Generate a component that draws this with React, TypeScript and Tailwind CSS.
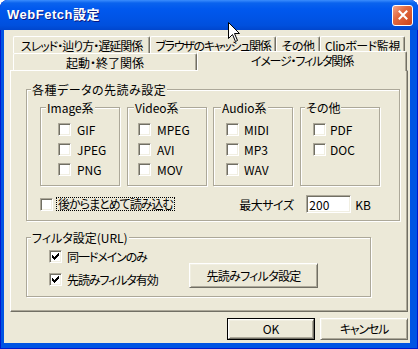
import type { ReactNode } from "react";

const sunken =
  "bg-white border border-t-[#ACA899] border-l-[#ACA899] border-r-white border-b-white shadow-[inset_1px_1px_0_#716F64,inset_-1px_-1px_0_#F1EFE2]";

function Check({ on }: { on?: boolean }) {
  return (
    <span className={"w-[13px] h-[13px] shrink-0 flex items-center justify-center " + sunken}>
      {on && (
        <svg width="7" height="7" viewBox="0 0 7 7" shapeRendering="crispEdges">
          <path
            d="M6 0h1v1h-1zM5 1h2v1h-2zM0 2h1v1h-1zM4 2h3v1h-3zM0 3h2v1h-2zM3 3h3v1h-3zM0 4h5v1h-5zM1 5h3v1h-3zM2 6h1v1h-1z"
            fill="#000"
          />
        </svg>
      )}
    </span>
  );
}

function Item({
  label,
  on,
  gap = "gap-[5px]",
  tx = "",
}: {
  label: string;
  on?: boolean;
  gap?: string;
  tx?: string;
}) {
  return (
    <div className={"flex items-center h-[13px] whitespace-nowrap " + gap}>
      <Check on={on} />
      <span className={"leading-[13px] " + tx}>{label}</span>
    </div>
  );
}

function Group({
  title,
  className,
  lx = "ml-[5px]",
  children,
}: {
  title: string;
  className: string;
  lx?: string;
  children: ReactNode;
}) {
  return (
    <fieldset
      className={
        "shrink-0 border border-[#ACA899] shadow-[inset_1px_1px_0_#fff,1px_1px_0_#fff] " + className
      }
    >
      <legend className={"px-[1px] leading-[13px] bg-[#ECE9D8] whitespace-nowrap " + lx}>{title}</legend>
      {children}
    </fieldset>
  );
}

function Tab({ className, children }: { className: string; children: ReactNode }) {
  return (
    <div
      className={
        "flex items-center justify-center h-full shrink-0 whitespace-nowrap leading-[13px] bg-[#ECE9D8] border-t border-l border-r border-t-white border-l-white border-r-[#716F64] rounded-t-[2px] shadow-[inset_-1px_0_0_#ACA899] " +
        className
      }
    >
      {children}
    </div>
  );
}

const raised =
  "border border-t-white border-l-white border-r-[#716F64] border-b-[#716F64] shadow-[inset_1px_1px_0_#F1EFE2,inset_-1px_-1px_0_#ACA899] bg-[#ECE9D8]";

function Btn({ children, def, className }: { children: ReactNode; def?: boolean; className: string }) {
  if (def) {
    return (
      <div className={"flex border border-black " + className}>
        <div className={"flex-1 flex items-center justify-center " + raised}>{children}</div>
      </div>
    );
  }
  return <div className={"flex items-center justify-center " + raised + " " + className}>{children}</div>;
}

export default function App() {
  return (
    <div className="relative w-[418px] h-[349px] bg-white text-[12px] text-black font-['Noto_Sans_CJK_JP',sans-serif] [font-feature-settings:'palt'] select-none">
      <div className="flex flex-col w-full h-full rounded-t-[8px] overflow-hidden bg-[#0054E3] shadow-[inset_1px_0_0_#0019CF,inset_-1px_0_0_#0019CF,inset_0_-1px_0_#0019CF]">
        {/* title bar */}
        <div className="h-[30px] shrink-0 flex items-center justify-between pl-[7px] pr-[5px] bg-[linear-gradient(to_bottom,#3b8dfd_0%,#0a63ee_10%,#0058ee_30%,#0054e6_60%,#0050dd_85%,#0046cd_100%)]">
          <span className="text-white font-bold text-[13px] tracking-[0.5px] font-['Liberation_Sans','Noto_Sans_CJK_JP',sans-serif] [text-shadow:1px_1px_0_#0A1883]">
            WebFetch設定
          </span>
          <div className="w-[21px] h-[21px] rounded-[3px] border border-white flex items-center justify-center bg-[linear-gradient(135deg,#F2A58C_0%,#E2693F_40%,#C9431B_100%)]">
            <svg width="10" height="10" viewBox="0 0 10 10">
              <path d="M1.5 1.5l7 7M8.5 1.5l-7 7" stroke="#fff" strokeWidth="2" strokeLinecap="square" />
            </svg>
          </div>
        </div>

        <div className="flex-1 flex pl-[4px] pr-[8px] pb-[6px]">
          <div className="flex-1 flex flex-col bg-[#ECE9D8] pl-[6px] pr-[2px] pt-[6px] pb-[3px]">
            {/* tabs */}
            <div className="flex ml-[3px] h-[17px]">
              <Tab className="w-[137px] tracking-[-1px]">スレッド・辿り方・遅延関係</Tab>
              <Tab className="w-[126px] tracking-[-1.3px]">ブラウザのキャッシュ関係</Tab>
              <Tab className="w-[44px] tracking-[-0.5px]">その他</Tab>
              <Tab className="w-[85px] tracking-[-0.4px]">Clipボード監視</Tab>
            </div>
            <div className="flex items-end ml-[3px] h-[17px]">
              <Tab className="w-[184px]">起動・終了関係</Tab>
              <div className="relative z-10 w-[210px] h-[20px] -mb-px shrink-0 flex items-center justify-center pb-[2px] whitespace-nowrap leading-[13px] tracking-[-1.2px] bg-[#ECE9D8] border-t border-l border-r border-t-white border-l-white border-r-[#716F64] rounded-t-[2px] shadow-[inset_-1px_0_0_#ACA899]">
                イメージ・フィルタ関係
              </div>
            </div>

            {/* tab page */}
            <div className="h-[242px] shrink-0 flex flex-col border border-t-white border-l-white border-r-[#716F64] border-b-[#716F64] shadow-[inset_-1px_-1px_0_#ACA899] pl-[15px] pt-[12px]">
              <Group title="各種データの先読み設定" className="w-[374px] h-[138px]" lx="ml-[4px] tracking-[0.5px]">
                <div className="flex pl-[13px] mt-[5px]">
                  <Group title="Image系" className="w-[80px] h-[85px]" lx="ml-[5px]">
                    <div className="flex flex-col gap-[7px] pl-[17px] pt-[9px]">
                      <Item label="GIF" gap="gap-[6px]" />
                      <Item label="JPEG" gap="gap-[6px]" />
                      <Item label="PNG" gap="gap-[6px]" />
                    </div>
                  </Group>
                  <Group title="Video系" className="w-[80px] h-[85px] ml-[7px]" lx="ml-[6px]">
                    <div className="flex flex-col gap-[7px] pl-[10px] pt-[9px]">
                      <Item label="MPEG" gap="gap-[6px]" />
                      <Item label="AVI" gap="gap-[6px]" />
                      <Item label="MOV" gap="gap-[6px]" />
                    </div>
                  </Group>
                  <Group title="Audio系" className="w-[80px] h-[85px] ml-[6px]" lx="ml-[7px]">
                    <div className="flex flex-col gap-[7px] pl-[12px] pt-[9px]">
                      <Item label="MIDI" />
                      <Item label="MP3" />
                      <Item label="WAV" />
                    </div>
                  </Group>
                  <Group title="その他" className="w-[80px] h-[85px] ml-[7px]" lx="ml-[4px]">
                    <div className="flex flex-col gap-[7px] pl-[12px] pt-[9px]">
                      <Item label="PDF" gap="gap-[4px]" />
                      <Item label="DOC" gap="gap-[4px]" />
                    </div>
                  </Group>
                </div>
                <div className="flex items-center h-[18px] mt-[9px] pl-[13px] pr-[28px] whitespace-nowrap">
                  <Check />
                  <span className="ml-[3px] px-[1px] border border-dotted border-black leading-[12px] tracking-[-1px]">
                    後からまとめて読み込む
                  </span>
                  <span className="ml-auto leading-[13px] tracking-[-0.5px]">最大サイズ</span>
                  <div className={"ml-[13px] w-[45px] h-[18px] flex items-center pl-[2px] leading-[13px] " + sunken}>
                    200
                  </div>
                  <span className="ml-[4px] leading-[13px]">KB</span>
                </div>
              </Group>

              <Group title="フィルタ設定(URL)" className="w-[345px] h-[66px] mt-[10px]" lx="ml-[4px]">
                <div className="flex pl-[22px] pt-[6px]">
                  <div className="w-[140px] flex flex-col gap-[10px]">
                    <Item label="同一ドメインのみ" on tx="tracking-[-1.1px]" />
                    <Item label="先読みフィルタ有効" on tx="tracking-[-1.1px]" />
                  </div>
                  <Btn className="mt-[13px] w-[129px] h-[25px] tracking-[-0.7px]">先読みフィルタ設定</Btn>
                </div>
              </Group>
            </div>

            {/* buttons */}
            <div className="flex justify-end gap-[5px] mt-[6px]">
              <Btn def className="w-[88px] h-[22px]">
                OK
              </Btn>
              <Btn className="w-[88px] h-[22px] tracking-[-1.2px]">キャンセル</Btn>
            </div>
          </div>
        </div>
      </div>

      {/* mouse pointer */}
      <svg className="absolute left-[228px] top-[22px]" width="13" height="21" viewBox="0 0 13 21">
        <path d="M0.5 0.5V16.5L4.5 12.5L7.5 19.5L9.5 18.5L6.5 11.5H11.5Z" fill="#fff" stroke="#000" strokeLinejoin="miter" />
      </svg>
    </div>
  );
}
